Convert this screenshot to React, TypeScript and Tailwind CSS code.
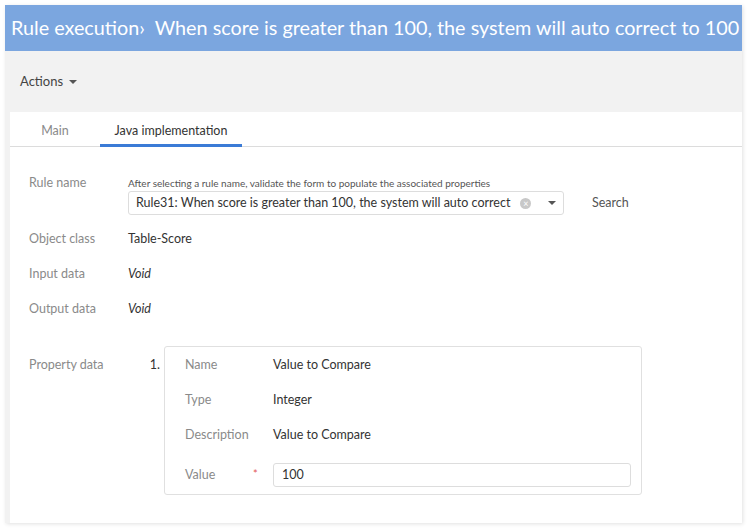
import { ReactNode } from "react";

const RULE_TEXT = "Rule31: When score is greater than 100, the system will auto correct";

interface FieldRowProps {
  label: string;
  children: ReactNode;
  className?: string;
}

const FieldRow = ({ label, children, className = "" }: FieldRowProps) => (
  <div className={"flex leading-[16px] " + className}>
    <div className="w-[99px] shrink-0 text-[#8a8a8a]">{label}</div>
    <div className="text-[#333]">{children}</div>
  </div>
);

const Caret = () => (
  <span className="inline-block w-0 h-0 border-l-[4px] border-r-[4px] border-t-[4px] border-l-transparent border-r-transparent border-t-[#555]" />
);

const PropertyBox = () => (
  <div className="w-[478px] border border-[#e0e0e0] rounded-[3px] pl-[20px] pr-[10px] pt-[10px] pb-[7px]">
    <div className="flex leading-[16px]">
      <div className="w-[88px] text-[#8a8a8a]">Name</div>
      <div className="text-[#333]">Value to Compare</div>
    </div>
    <div className="flex leading-[16px] mt-[19px]">
      <div className="w-[88px] text-[#8a8a8a]">Type</div>
      <div className="text-[#333]">Integer</div>
    </div>
    <div className="flex leading-[16px] mt-[19px]">
      <div className="w-[88px] text-[#8a8a8a]">Description</div>
      <div className="text-[#333]">Value to Compare</div>
    </div>
    <div className="flex items-center mt-[20px]">
      <div className="w-[88px] flex text-[#8a8a8a]">
        <span className="w-[68px]">Value</span>
        <span className="text-[#e25555] text-[11px]">*</span>
      </div>
      <div className="w-[358px] h-[24px] border border-[#ddd] rounded-[3px] px-[8px] flex items-center text-[#333]">
        100
      </div>
    </div>
  </div>
);

export default function App() {
  return (
    <div className="min-h-screen bg-white p-[5px] font-['Lato','Open_Sans',sans-serif] text-[12.5px]">
      <div className="w-[737px] h-[518px] bg-[#f2f2f2] shadow-[1px_1px_4px_rgba(0,0,0,0.12)] flex flex-col">
        <div className="h-[46px] bg-[#7ba6df] flex items-center pl-[6px] text-white text-[19.8px] whitespace-nowrap">
          Rule execution›&nbsp; When score is greater than 100, the system will auto correct to 100
        </div>

        <div className="h-[61px] flex items-center pl-[15px] gap-[6px] text-[#444] text-[13px]">
          <span>Actions</span>
          <Caret />
        </div>

        <div className="ml-[5px] flex-1 bg-white">
          <div className="h-[35px] flex border-b border-[#dcdcdc]">
            <div className="w-[90px] flex items-center justify-center text-[#8a8a8a] pt-[5px]">Main</div>
            <div className="w-[142px] flex items-center justify-center text-[#333] border-b-[3px] border-[#3b7bd6] pt-[6px] mb-[-1px]">
              Java implementation
            </div>
          </div>

          <div className="pl-[19px] pt-[28px]">
            <div className="flex">
              <div className="w-[99px] shrink-0 leading-[16px] text-[#8a8a8a]">Rule name</div>
              <div>
                <div className="pt-[1px] leading-[14px] text-[10px] text-[#555]">
                  After selecting a rule name, validate the form to populate the associated properties
                </div>
                <div className="flex items-center mt-[1px]">
                  <div className="w-[436px] h-[24px] border border-[#ddd] rounded-[3px] pl-[7px] flex items-center text-[#333]">
                    <span className="whitespace-nowrap">{RULE_TEXT}</span>
                    <span className="w-[11px] h-[11px] rounded-full bg-[#c8c8c8] flex items-center justify-center text-white text-[9px] leading-none ml-[10px]">
                      ×
                    </span>
                    <span className="ml-[17px] flex">
                      <Caret />
                    </span>
                  </div>
                  <span className="ml-[28px] text-[#555]">Search</span>
                </div>
              </div>
            </div>

            <FieldRow label="Object class" className="mt-[16px]">
              Table-Score
            </FieldRow>
            <FieldRow label="Input data" className="mt-[19px]">
              <i>Void</i>
            </FieldRow>
            <FieldRow label="Output data" className="mt-[19px]">
              <i>Void</i>
            </FieldRow>

            <div className="flex mt-[29px]">
              <div className="w-[99px] shrink-0 pt-[11px] leading-[16px] text-[#8a8a8a]">Property data</div>
              <div className="w-[36px] pt-[11px] pr-[4px] leading-[16px] text-right text-[#333]">1.</div>
              <PropertyBox />
            </div>
          </div>
        </div>
      </div>
    </div>
  );
}
